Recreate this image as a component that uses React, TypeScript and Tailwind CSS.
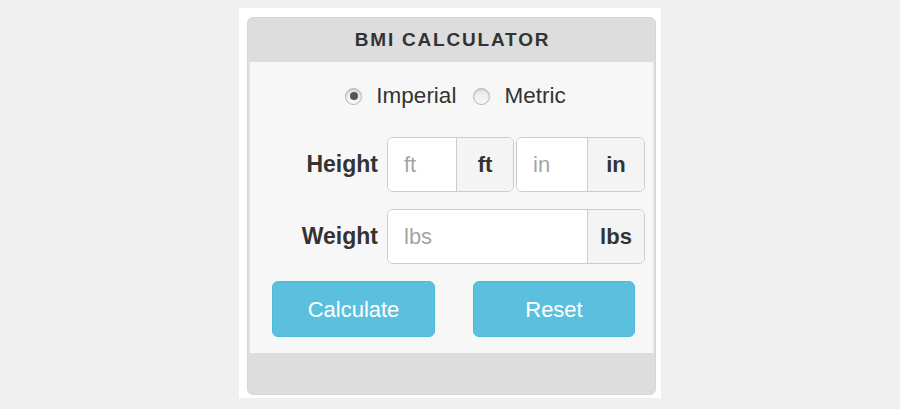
import React from "react";

const font = { fontFamily: '"Liberation Sans", Arial, sans-serif' };

function Radio({ checked, label }: { checked: boolean; label: string }) {
  return (
    <label className="flex items-center">
      <span className="w-[17px] h-[17px] rounded-full border border-[#b5b5b5] bg-gradient-to-b from-[#e6e6e6] to-[#fafafa] flex items-center justify-center shadow-[inset_0_1px_2px_rgba(0,0,0,0.15)]">
        {checked && <span className="w-[8px] h-[8px] rounded-full bg-[#555]" />}
      </span>
      <span className="ml-[14px] text-[22.5px] text-[#333]">{label}</span>
    </label>
  );
}

function Group({ ph, unit, inputW, className = "" }: { ph: string; unit: string; inputW: string; className?: string }) {
  return (
    <div className={`flex h-[55px] border border-[#ccc] rounded-[6px] overflow-hidden bg-white ${className}`}>
      <input
        placeholder={ph}
        className={`${inputW} h-full px-[16px] text-[22px] text-[#333] placeholder:text-[#a5a5a5] bg-white outline-none`}
        style={font}
      />
      <div className="w-[57px] h-full flex items-center justify-center border-l border-[#ccc] bg-[#f4f4f4] text-[22px] font-bold text-[#333]">
        {unit}
      </div>
    </div>
  );
}

export default function App() {
  return (
    <div className="w-[900px] h-[409px] bg-[#f0f0f0] flex justify-center pt-[8px]" style={font}>
      <div className="w-[422px] h-[390px] bg-white pt-[9px] pl-[8px]">
        <div className="w-[409px] rounded-[6px] bg-[#dddddd] border border-[#d6d6d6] overflow-hidden">
          <div className="h-[44px] flex items-center justify-center text-[19px] font-bold tracking-[1.8px] text-[#333] pl-[2px]">
            BMI CALCULATOR
          </div>
          <div className="mx-px h-[291px] bg-[#f7f7f7] border-x border-[#e6e6e6] pt-[18px]">
            <div className="h-[32px] flex items-center justify-center gap-[17px] pl-[8px]">
              <Radio checked label="Imperial" />
              <Radio checked={false} label="Metric" />
            </div>
            <div className="mt-[25px] flex items-center">
              <div className="w-[128px] text-right text-[23px] font-bold text-[#333]">Height</div>
              <div className="ml-[9px] flex gap-[2px]">
                <Group ph="ft" unit="ft" inputW="w-[68px]" />
                <Group ph="in" unit="in" inputW="w-[70px]" />
              </div>
            </div>
            <div className="mt-[17px] flex items-center">
              <div className="w-[128px] text-right text-[23px] font-bold text-[#333]">Weight</div>
              <div className="ml-[9px] flex">
                <Group ph="lbs" unit="lbs" inputW="w-[199px]" />
              </div>
            </div>
            <div className="mt-[17px] flex pl-[22px] gap-[38px]">
              <button className="w-[163px] h-[56px] rounded-[6px] bg-[#5bc0de] border border-[#4fb9d9] text-white text-[22px]" style={font}>
                Calculate
              </button>
              <button className="w-[162px] h-[56px] rounded-[6px] bg-[#5bc0de] border border-[#4fb9d9] text-white text-[22px]" style={font}>
                Reset
              </button>
            </div>
          </div>
          <div className="h-[41px]" />
        </div>
      </div>
    </div>
  );
}
